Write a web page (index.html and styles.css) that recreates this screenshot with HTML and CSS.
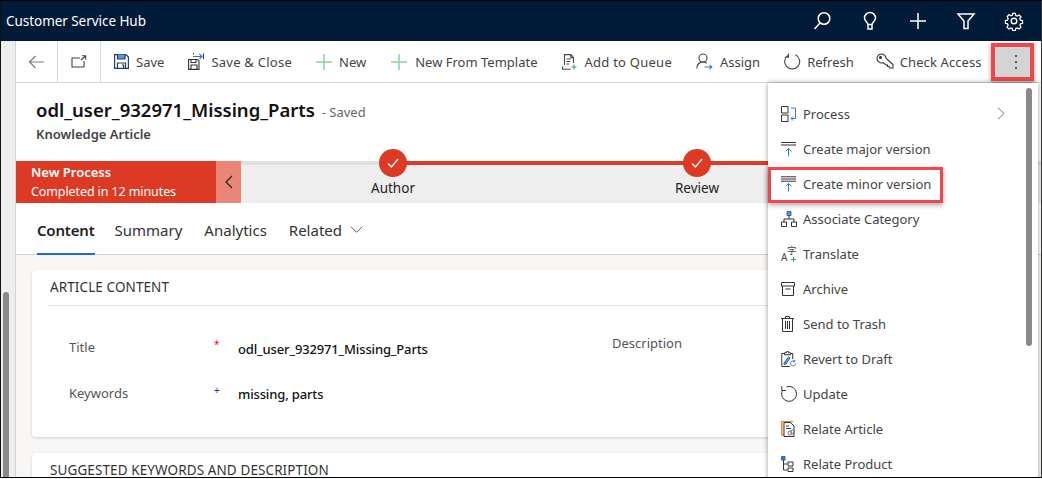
FILE: index.html
```html
<!DOCTYPE html>
<html lang="en">
<head>
  <meta charset="UTF-8">
  <title>Customer Service Hub</title>
  <link rel="stylesheet" href="styles.css">
</head>
<body>
<div class="app">
  <header class="topbar">
    <span class="app-name">Customer Service Hub</span>
    <div class="top-icons">
      <svg width="20" height="20" viewBox="0 0 20 20" fill="none" stroke="#fff" stroke-width="1.5"><circle cx="12" cy="7.500" r="5.800"/><path d="M8 12 2.500 18"/></svg>
      <svg width="20" height="20" viewBox="0 0 20 20" fill="none" stroke="#fff" stroke-width="1.5"><path d="M8 13.500C7.500 11 4.500 10 4.500 7a5.500 5.500 0 0 1 11 0c0 3-3 4-3.500 6.500zM8 13.500V18h4v-4.500"/></svg>
      <svg width="20" height="20" viewBox="0 0 20 20" fill="none" stroke="#fff" stroke-width="1.500"><path d="M10 2v16M2 10h16"/></svg>
      <svg width="20" height="20" viewBox="0 0 20 20" fill="none" stroke="#fff" stroke-width="1.500"><path d="M2 3h16l-6 7v7.500H8V10z"/></svg>
      <svg width="20" height="20" viewBox="0 0 20 20" fill="none" stroke="#fff" stroke-width="1.400"><circle cx="10" cy="10" r="2.800"/><path d="M8.500 1.500h3l.5 2.400 1.600.7 2.100-1.300 2.100 2.100-1.300 2.100.7 1.600 2.300.5v3l-2.300.5-.7 1.600 1.300 2.100-2.100 2.100-2.100-1.300-1.600.7-.5 2.300h-3l-.5-2.300-1.600-.7-2.100 1.300-2.100-2.100 1.300-2.100-.7-1.600-2.300-.5v-3l2.300-.5.7-1.600L2.500 5l2.100-2.100 2.100 1.300 1.600-.7z" transform="translate(1 1) scale(.9)"/></svg>
    </div>
  </header>

  <div class="workspace">
    <div class="rail"><div class="rail-thumb"></div></div>
    <main class="page">
      <nav class="commands">
        <button class="cmd cmd-nav">
          <svg width="17" height="14" viewBox="0 0 17 14" fill="none" stroke="#7d7d7d" stroke-width="1.200"><path d="M16 7H1.500M7.500 1 1.500 7l6 6"/></svg>
        </button>
        <button class="cmd cmd-nav">
          <svg width="16" height="13" viewBox="0 0 16 13" fill="none" stroke="#444" stroke-width="1.100"><path d="M9 3H1v9h12V6M10 5l4.500-4M11 .8h3.700v3.700"/></svg>
        </button>
        <button class="cmd cmd-save">
          <svg width="15" height="15" viewBox="0 0 15 15" fill="none" stroke="#1f3f66" stroke-width="1.200"><path d="M.6.6h11.300l2.500 2.500v11.300H.6z"/><path d="M3.500.6v4.400h7.500V.6" fill="#5c9ad5"/><path d="M3.500 14.400V9h8v5.400M8 11h1.500v3"/></svg>
          <span>Save</span>
        </button>
        <button class="cmd cmd-close">
          <svg width="16" height="17" viewBox="0 0 16 17" fill="none" stroke="#333" stroke-width="1.100"><path d="M.6 6.500h8.900l1.500 1.500v8.400H.6z"/><path d="M3 6.500v3h5v-3M3 16.400v-4.400h6v4.400"/><path d="M5 3.500h9M11.500 1l2.500 2.500L11.500 6" stroke="#2b7cc9"/><path d="M6 .6h-1M15.500.6v5.500"/></svg>
          <span>Save &amp; Close</span>
        </button>
        <button class="cmd cmd-new">
          <svg width="16" height="16" viewBox="0 0 16 16" fill="none" stroke="#8fd0a5" stroke-width="1.500"><path d="M8 0v16M0 8h16"/></svg>
          <span>New</span>
        </button>
        <button class="cmd cmd-template">
          <svg width="16" height="16" viewBox="0 0 16 16" fill="none" stroke="#8fd0a5" stroke-width="1.500"><path d="M8 0v16M0 8h16"/></svg>
          <span>New From Template</span>
        </button>
        <button class="cmd cmd-queue">
          <svg width="15" height="16" viewBox="0 0 15 16" fill="none" stroke="#444" stroke-width="1.100"><path d="M2.500 11V.6h6.500l2.500 3V9M8.800.6v3.200h2.700M4.500 5h4M4.500 7.500h4M4.500 10h2.500M.6 12.500v2.800h8"/><path d="M12 10.500v5M9.500 13h5" stroke="#2aa657"/></svg>
          <span>Add to Queue</span>
        </button>
        <button class="cmd cmd-assign">
          <svg width="17" height="17" viewBox="0 0 17 17" fill="none" stroke="#444" stroke-width="1.100"><circle cx="7" cy="5" r="4"/><path d="M.8 15.500c0-4 2.500-6.500 6.200-6.500 1.500 0 2.700.4 3.700 1.200"/><path d="M8.500 14h7.500M13.500 11.800l2.300 2.200-2.300 2.200" stroke="#2b7cc9"/></svg>
          <span>Assign</span>
        </button>
        <button class="cmd cmd-refresh">
          <svg width="17" height="17" viewBox="0 0 17 17" fill="none" stroke="#444" stroke-width="1.100"><path d="M11.500 1.800a7.500 7.500 0 1 1-7 .2M4.500 .5v3.700H.8"/></svg>
          <span>Refresh</span>
        </button>
        <button class="cmd cmd-access">
          <svg width="18" height="17" viewBox="0 0 18 17" fill="none" stroke="#333" stroke-width="1.100"><path d="M1 5.500C1 3 3 1 5.500 1 8 1 10 3 10 5.200l7 6.300v3.500h-3l-1-1.500h-1.500V12H10L7.500 9.800C4 10.800 1 8.500 1 5.500z"/><circle cx="4.500" cy="4.500" r="1" fill="#333"/></svg>
          <span>Check Access</span>
        </button>
        <button class="cmd-more" aria-label="More commands">
          <i></i><i></i><i></i>
        </button>
      </nav>

      <section class="record-head">
        <h1>odl_user_932971_Missing_Parts <small>- Saved</small></h1>
        <p>Knowledge Article</p>
      </section>

      <section class="process">
        <div class="process-flag">
          <strong>New Process</strong>
          <span>Completed in 12 minutes</span>
        </div>
        <div class="process-toggle">
          <svg width="9" height="14" viewBox="0 0 9 14" fill="none" stroke="#222" stroke-width="1.200"><path d="M8 1 2 7l6 6"/></svg>
        </div>
        <div class="process-track">
          <div class="stage stage-author">
            <span class="stage-dot"><svg width="12" height="10" viewBox="0 0 12 10" fill="none" stroke="#fff" stroke-width="1.300"><path d="M1 5.500 4.500 9 11 1"/></svg></span>
            <span>Author</span>
          </div>
          <div class="stage stage-review">
            <span class="stage-dot"><svg width="12" height="10" viewBox="0 0 12 10" fill="none" stroke="#fff" stroke-width="1.300"><path d="M1 5.500 4.500 9 11 1"/></svg></span>
            <span>Review</span>
          </div>
        </div>
      </section>

      <nav class="tabs">
        <a class="tab tab-on">Content</a>
        <a class="tab">Summary</a>
        <a class="tab">Analytics</a>
        <a class="tab">Related
          <svg width="13" height="7" viewBox="0 0 13 7" fill="none" stroke="#555" stroke-width="1"><path d="m1 .8 5.500 5.500L12 .8"/></svg>
        </a>
      </nav>

      <section class="form-area">
        <div class="card card-article">
          <h2>ARTICLE CONTENT</h2>
          <div class="fields">
            <div class="field-col">
              <div class="field">
                <label>Title</label>
                <span class="req">*</span>
                <b>odl_user_932971_Missing_Parts</b>
              </div>
              <div class="field">
                <label>Keywords</label>
                <span class="rec">+</span>
                <b>missing, parts</b>
              </div>
            </div>
            <label class="desc-label">Description</label>
          </div>
        </div>
        <div class="card">
          <h2>SUGGESTED KEYWORDS AND DESCRIPTION</h2>
        </div>
      </section>
    </main>
  </div>

  <aside class="menu">
    <div class="menu-thumb"></div>
    <ul>
      <li>
        <svg width="16" height="16" viewBox="0 0 16 16" fill="none" stroke="#333" stroke-width="1"><path d="M.5.500h6.500v6.500H.5zM.5 9h6.500v6.500H.5z"/><path d="M10 2h4.500v10.500h-4.500M12 10.500l-2 2 2 2" stroke="#2b7cc9"/></svg>
        <span>Process</span>
        <svg class="chev" width="8" height="13" viewBox="0 0 8 13" fill="none" stroke="#777" stroke-width="1"><path d="m1 .8 6 5.700-6 5.700"/></svg>
      </li>
      <li>
        <svg width="15" height="16" viewBox="0 0 15 16" fill="none" stroke="#333" stroke-width="1"><path d="M0 1.500h15M0 4h15"/><path d="M7.500 15.500V7.500M4.500 10.500l3-3 3 3" stroke="#2b7cc9"/></svg>
        <span>Create major version</span>
      </li>
      <li>
        <svg width="15" height="16" viewBox="0 0 15 16" fill="none" stroke="#333" stroke-width="1"><path d="M0 .8h15M0 3h15M0 5.200h15"/><path d="M7.500 15.500V7.500M4.500 10.500l3-3 3 3" stroke="#2b7cc9"/></svg>
        <span>Create minor version</span>
      </li>
      <li>
        <svg width="16" height="16" viewBox="0 0 16 16" fill="none" stroke="#333" stroke-width="1"><path d="M6 .5h4v4H6z" fill="#5c9ad5" stroke="#2b6cb0"/><path d="M8 4.500V8M3 11V8h10v3M.5 11h5v4.500h-5zM10.500 11h5v4.500h-5z"/></svg>
        <span>Associate Category</span>
      </li>
      <li>
        <svg class="translate" width="16" height="17" viewBox="0 0 16 17" fill="none"><text x="0" y="15.500" font-size="10" fill="#444">A</text><text x="6" y="9" font-size="9.500" fill="#444">字</text><path d="M12.500 12v5M10 14.500h5" stroke="#2aa657"/></svg>
        <span>Translate</span>
      </li>
      <li>
        <svg width="14" height="14" viewBox="0 0 14 14" fill="none" stroke="#333" stroke-width="1"><path d="M.5.500h13v3.500H.5zM1.500 4v9.500h11V4M4.500 7h5"/></svg>
        <span>Archive</span>
      </li>
      <li>
        <svg width="13" height="16" viewBox="0 0 13 16" fill="none" stroke="#333" stroke-width="1"><path d="M0 2.500h13M4.500 2.500V.5h4v2M1.500 2.500v13h10v-13M4.500 5v8M6.500 5v8M8.500 5v8"/></svg>
        <span>Send to Trash</span>
      </li>
      <li>
        <svg width="15" height="16" viewBox="0 0 15 16" fill="none" stroke="#333" stroke-width="1"><path d="M3.500 2.500H.8v13h8M9 2.500h2.700v5.500M3.500 3.800V1.800h2V.6h2v1.200h2v2z"/><path d="M3 12 7.500 6l1.500 1-4 6-2 .5z" fill="#5c9ad5" stroke="#2b6cb0"/><path d="M14.500 12.500a2.500 2.500 0 1 1-1-2.200M13.800 8.800v1.800H12" stroke="#2b7cc9"/></svg>
        <span>Revert to Draft</span>
      </li>
      <li>
        <svg width="17" height="17" viewBox="0 0 17 17" fill="none" stroke="#333" stroke-width="1"><path d="M5.500 1.800a7.500 7.500 0 1 1-4.300 4M.8 1.200v4.300h4.300"/></svg>
        <span>Update</span>
      </li>
      <li>
        <svg width="16" height="16" viewBox="0 0 16 16" fill="none" stroke-width="1"><path d="M11.500 1V.6H.6V14H3" stroke="#e8893a" stroke-width="1.500" fill="#fbe3cf"/><path d="M3 1.500h6.500L13 5v10.500H3z" fill="#fff" stroke="#333"/><path d="M5 5h3M5 7.500h5" stroke="#333"/><circle cx="9" cy="12" r="2" stroke="#777"/><circle cx="11.500" cy="11" r="2" stroke="#777"/></svg>
        <span>Relate Article</span>
      </li>
      <li>
        <svg width="14" height="16" viewBox="0 0 14 16" fill="none" stroke="#333" stroke-width="1"><path d="M.5.500h3.500v3.500H.5z" fill="#2b7cc9" stroke="#2b6cb0"/><path d="M2.500 4v10h4M2.500 8h4M7 6h5v4H7zM7 12h5v3.500H7z"/></svg>
        <span>Relate Product</span>
      </li>
    </ul>
  </aside>
</div>
</body>
</html>
```

FILE: styles.css
```css
* {
  box-sizing: border-box;
}
html, body {
  margin: 0;
  height: 100%;
  overflow: hidden;
}
body {
  font-family: "Noto Sans", "Open Sans", sans-serif;
  font-size: 13px;
  color: #333;
  background: #fff;
}
svg {
  display: block;
  flex: none;
}
button {
  font: inherit;
  color: inherit;
  background: none;
  border: none;
  padding: 0;
}

.app {
  position: relative;
  width: 1042px;
  height: 478px;
  border-top: 1px solid #000;
  border-bottom: 1px solid #000;
  border-left: 1px solid #111;
  border-right: 1px solid #333;
  overflow: hidden;
  display: flex;
  flex-direction: column;
}

.topbar {
  height: 40px;
  flex: none;
  background: #001a38;
  color: #fff;
  display: flex;
  align-items: center;
  justify-content: space-between;
  padding: 0 17px 0 5px;
}
.app-name {
  font-size: 13.5px;
  letter-spacing: -0.05px;
}
.top-icons {
  display: flex;
  gap: 28px;
}

.workspace {
  flex: 1;
  display: flex;
  min-height: 0;
}
.rail {
  width: 15px;
  flex: none;
  background: #eeeeee;
  border-right: 1px solid #d4d4d4;
  padding: 251px 6px 0 2px;
}
.rail-thumb {
  height: 190px;
  background: #8a8a8a;
  border-radius: 3px 3px 0 0;
}
.page {
  flex: 1;
  min-width: 0;
  display: flex;
  flex-direction: column;
}

.commands {
  height: 42px;
  flex: none;
  display: flex;
  align-items: stretch;
  border-bottom: 1px solid #d8d8d8;
}
.cmd {
  display: flex;
  align-items: center;
  gap: 7px;
  white-space: nowrap;
  color: #444;
}
.cmd-nav {
  justify-content: center;
  width: 42px;
  border-right: 1px solid #d8d8d8;
}
.cmd-nav + .cmd-nav {
  width: 43px;
}
.cmd-save { margin-left: 13px; }
.cmd-close { margin-left: 24px; }
.cmd-new { margin-left: 24px; }
.cmd-template { margin-left: 25px; gap: 8px; }
.cmd-queue { margin-left: 25px; }
.cmd-assign { margin-left: 24px; }
.cmd-refresh { margin-left: 24px; gap: 6px; }
.cmd-access { margin-left: 22px; gap: 6px; }
.cmd-close span,
.cmd-queue span {
  letter-spacing: 0.25px;
}
.cmd-access span {
  letter-spacing: 0.1px;
}
.cmd-more {
  width: 43px;
  height: 38px;
  margin: 2px 7px 0 auto;
  padding-left: 7px;
  background: #d4d4d4;
  outline: 4px solid #f0484a;
  outline-offset: -4px;
  box-shadow: 0 2px 5px rgba(0,0,0,0.35);
  display: flex;
  flex-direction: column;
  align-items: center;
  justify-content: center;
  gap: 4px;
}
.cmd-more i {
  width: 2px;
  height: 2px;
  background: #555;
}

.record-head {
  height: 78px;
  flex: none;
  padding: 14px 0 0 20px;
}
.record-head h1 {
  margin: 0;
  font-size: 18.5px;
  line-height: 25px;
  font-weight: 600;
  color: #111;
}
.record-head h1 small {
  font-size: 13px;
  font-weight: 400;
  color: #666;
  margin-left: 2px;
}
.record-head p {
  margin: 0;
  font-size: 13px;
  line-height: 18px;
  font-weight: 600;
  color: #444;
}

.process {
  height: 42px;
  flex: none;
  display: flex;
}
.process-flag {
  width: 200px;
  background: #dc3a24;
  color: #fff;
  padding: 2px 0 0 15px;
  display: flex;
  flex-direction: column;
  font-size: 12.5px;
  line-height: 19px;
  letter-spacing: -0.1px;
}
.process-flag strong {
  font-size: 13px;
  letter-spacing: 0;
  font-weight: 600;
}
.process-toggle {
  width: 25px;
  background: #ea8578;
  display: flex;
  align-items: center;
  justify-content: center;
}
.process-track {
  flex: 1;
  position: relative;
  background: linear-gradient(#e0e0e0 0 4px, #eeeeee 4px);
}
.stage {
  position: absolute;
  top: -12px;
  width: 100px;
  display: flex;
  flex-direction: column;
  align-items: center;
  gap: 2px;
  color: #222;
  font-size: 13.5px;
}
.stage-author {
  left: 102px;
}
.stage-author::after {
  content: "";
  position: absolute;
  left: 50px;
  top: 12px;
  width: 580px;
  height: 4px;
  background: #dc3a24;
}
.stage-review {
  left: 406px;
}
.stage-dot {
  position: relative;
  z-index: 1;
  width: 28px;
  height: 28px;
  border-radius: 50%;
  background: #dc3a24;
  display: flex;
  align-items: center;
  justify-content: center;
}

.tabs {
  height: 52px;
  flex: none;
  display: flex;
  gap: 22px;
  padding-left: 21px;
  border-bottom: 1px solid #d4d4d4;
}
.tab {
  display: flex;
  align-items: center;
  gap: 8px;
  padding-top: 3px;
  font-size: 15px;
  color: #333;
  border-bottom: 2px solid transparent;
  margin-bottom: -1px;
}
.tab-on {
  font-weight: 600;
  color: #222;
  letter-spacing: -0.2px;
  margin-right: -2px;
  border-bottom-color: #2266e3;
}

.form-area {
  flex: 1;
  min-height: 0;
  background: #f8f7f6;
  padding: 15px 0 0 16px;
  display: flex;
  flex-direction: column;
  gap: 16px;
}
.card {
  width: 760px;
  background: #fff;
  border-radius: 4px;
  box-shadow: 0 1px 3px rgba(0,0,0,0.16);
  padding: 0 16px;
  flex: none;
}
.card-article {
  height: 167px;
}
.card h2 {
  margin: 0;
  height: 36px;
  padding-left: 2px;
  font-size: 13.5px;
  line-height: 34px;
  font-weight: 400;
  color: #333;
  letter-spacing: 0.1px;
  border-bottom: 1px solid #e6e6e6;
}
.fields {
  display: flex;
  padding: 31px 0 0 21px;
}
.field-col {
  width: 543px;
  display: flex;
  flex-direction: column;
  gap: 26px;
}
.field {
  display: flex;
  align-items: center;
  height: 20px;
}
.field label {
  width: 144px;
  color: #555;
}
.field span {
  width: 25px;
  padding-left: 1px;
  font-size: 10px;
  margin-top: -6px;
}
.req { color: #e81123; }
.rec { color: #2222dd; font-size: 8px; margin-top: -8px; }
.field b {
  font-weight: 500;
  color: #111;
  letter-spacing: -0.15px;
  margin-top: 3px;
}
.field + .field b {
  margin-top: 1px;
}
.desc-label {
  color: #555;
  margin-top: -3px;
}

.menu {
  position: absolute;
  left: 767px;
  top: 82px;
  width: 270px;
  height: 400px;
  background: #fff;
  box-shadow: 0 0 5px rgba(0,0,0,0.4);
  padding-top: 13px;
}
.menu ul {
  list-style: none;
  margin: 0;
  padding: 0;
}
.menu li {
  position: relative;
  height: 35px;
  display: flex;
  align-items: center;
  padding-left: 13px;
  color: #444;
}
.menu li svg:first-child {
  margin-right: 7px;
}
.menu li span {
  position: absolute;
  left: 35px;
}
.translate text {
  font-family: "Noto Sans", "Noto Sans CJK SC", sans-serif;
}
/* red callout from the screenshot */
.menu li:nth-child(3)::after {
  content: "";
  box-sizing: border-box;
  position: absolute;
  left: 0;
  top: 1px;
  width: 175px;
  height: 36px;
  border: 3px solid #f0484a;
  box-shadow: 0 2px 5px rgba(0,0,0,0.35);
}
.menu li .chev {
  position: absolute;
  left: 229px;
}
.menu-thumb {
  position: absolute;
  right: 6px;
  top: 5px;
  width: 6px;
  height: 258px;
  background: #8a8a8a;
  border-radius: 3px;
}
```
